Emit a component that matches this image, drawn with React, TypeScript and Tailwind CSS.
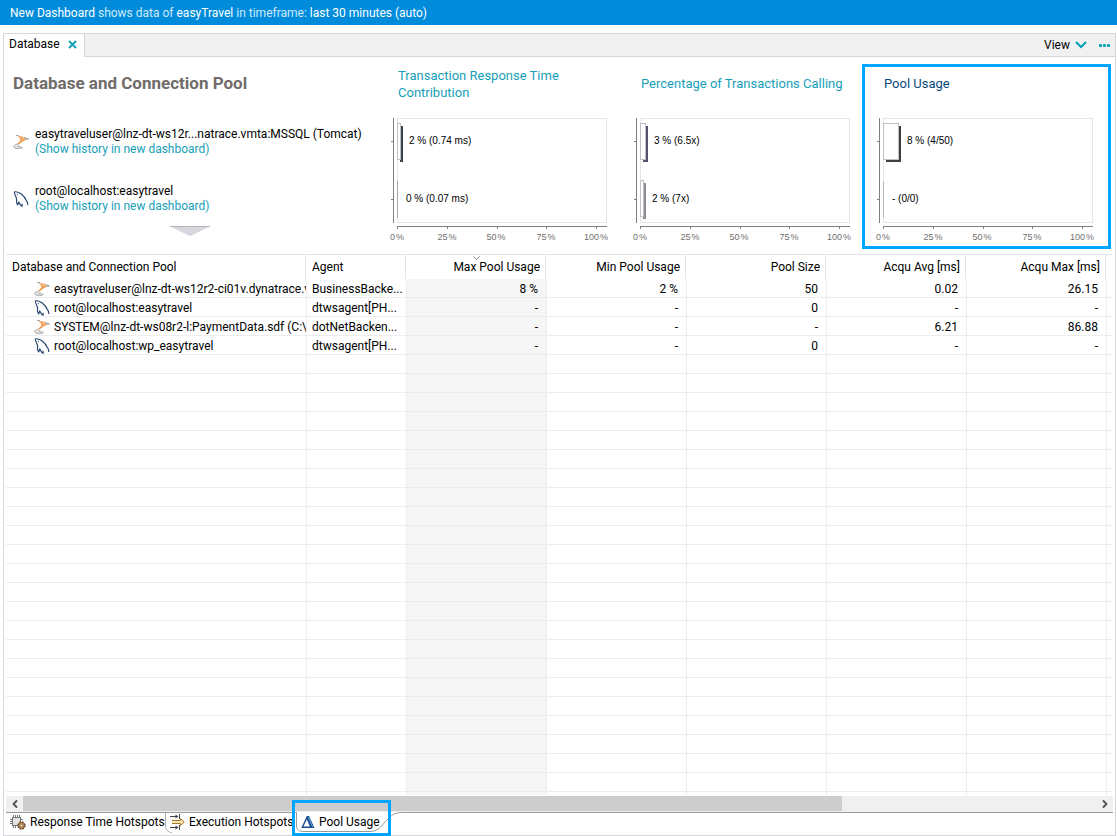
import { useState } from 'react'
import { ChevronLeft, ChevronRight } from 'lucide-react'
import clsx from 'clsx'

type DbKind = 'mssql' | 'mysql'

interface Bar {
  width: number
  shadow: string
  labelX: number
  label: string
}

interface Row {
  kind: DbKind
  name: string
  agent: string
  values: string[]
}

const CHARTS: { title: string; bars: Bar[] }[] = [
  {
    title: 'Transaction Response Time Contribution',
    bars: [
      { width: 3, shadow: '#3c4448', labelX: 30, label: '2 % (0.74 ms)' },
      { width: 0, shadow: '#a9a9a9', labelX: 27, label: '0 % (0.07 ms)' },
    ],
  },
  {
    title: 'Percentage of Transactions Calling',
    bars: [
      { width: 5, shadow: '#55526f', labelX: 32, label: '3 % (6.5x)' },
      { width: 3, shadow: '#8a8d90', labelX: 30, label: '2 % (7x)' },
    ],
  },
  {
    title: 'Pool Usage',
    bars: [
      { width: 15, shadow: '#3c4043', labelX: 42, label: '8 % (4/50)' },
      { width: 0, shadow: '#b9b9b9', labelX: 27, label: '- (0/0)' },
    ],
  },
]

const POOLS: { kind: DbKind; name: string }[] = [
  { kind: 'mssql', name: 'easytraveluser@lnz-dt-ws12r...natrace.vmta:MSSQL (Tomcat)' },
  { kind: 'mysql', name: 'root@localhost:easytravel' },
]

const VALUE_COLUMNS = ['Max Pool Usage', 'Min Pool Usage', 'Pool Size', 'Acqu Avg [ms]', 'Acqu Max [ms]']

const ROWS: Row[] = [
  {
    kind: 'mssql',
    name: 'easytraveluser@lnz-dt-ws12r2-ci01v.dynatrace.v',
    agent: 'BusinessBacke...',
    values: ['8 %', '2 %', '50', '0.02', '26.15'],
  },
  { kind: 'mysql', name: 'root@localhost:easytravel', agent: 'dtwsagent[PH...', values: ['-', '-', '0', '-', '-'] },
  {
    kind: 'mssql',
    name: 'SYSTEM@lnz-dt-ws08r2-l:PaymentData.sdf (C:\\',
    agent: 'dotNetBacken...',
    values: ['-', '-', '-', '6.21', '86.88'],
  },
  { kind: 'mysql', name: 'root@localhost:wp_easytravel', agent: 'dtwsagent[PH...', values: ['-', '-', '0', '-', '-'] },
]

const EMPTY_ROWS = 24

function DbIcon({ kind }: { kind: DbKind }) {
  if (kind === 'mssql') {
    return (
      <svg viewBox="0 0 16 16" className="h-4 w-4 shrink-0" aria-hidden="true">
        <path d="M4 1.500L7 2.500L10.500 2.500L15 4.500L11 6.500L8 9L5 10.500L7.500 6.500L6.500 4Z" fill="#f8c493" />
        <path d="M5.500 3H9M7 5.500L10 4.500M9 7L12 5.500M5 10L8.500 6.500" fill="none" stroke="#ee9040" strokeWidth="1.200" />
        <path d="M3 1.500H6M11 3.500L15.500 5L12.500 5.500" fill="none" stroke="#a3a6aa" strokeWidth="1" />
        <path d="M5 10C1.500 10.500 0 12 1 13.500C3 15 8 15 9.500 13.500L5 12.500L6.500 11" fill="#e2e2e2" stroke="#a8a8a8" strokeWidth="0.900" />
      </svg>
    )
  }
  return (
    <svg viewBox="0 0 16 16" className="h-4 w-4 shrink-0" aria-hidden="true">
      <path
        d="M1.500 0.800C4 0.500 6 1.500 8 2.800C11 5.200 12.500 7.500 13.300 9.500C14.500 10.500 14.800 12 14.800 14M1.500 0.800C1 2 2 4 3 6C4 8 3.500 9 3.500 11C3.800 12.800 4.300 13.300 4.700 13.800C5.300 12.800 5.500 11.500 5.800 11C7 12.500 7 15 9.500 15.300M9.500 15.300C8.800 14.200 8.800 13.500 9.300 12.800"
        fill="none"
        stroke="#29466f"
        strokeWidth="1.200"
      />
      <circle cx="4.300" cy="3.600" r="0.600" fill="#29466f" />
    </svg>
  )
}

function BarChart({ bars }: { bars: Bar[] }) {
  return (
    <svg width="244" height="144" className="block overflow-visible" fontFamily="Liberation Sans, Arial, sans-serif" shapeRendering="crispEdges">
      <rect x="18.5" y="18.5" width="209" height="104" fill="#fff" stroke="#e6e6e6" />
      <path d="M14.5 18V123M12 41.5H14M12 99.5H14M18 126.5H228" fill="none" stroke="#808080" />
      {[0, 25, 50, 75, 100].map((tick, i) => (
        <g key={tick}>
          <rect x={18 + Math.round(i * 49.8)} y="127" width="1" height="2" fill="#808080" />
          <text x={18 + Math.round(i * 49.7)} y="140" textAnchor="middle" fontSize="9" fill="#707070">
            {tick}
            {'\u200a'}%
          </text>
        </g>
      ))}
      {bars.map((bar, i) => (
        <g key={bar.label}>
          {bar.width > 0 ? (
            <>
              <rect x="21" y={26 + i * 57} width={bar.width} height="36" fill={bar.shadow} />
              <rect x="18.5" y={23.5 + i * 57} width={bar.width} height="36" fill="#fff" stroke="#bfc1c6" />
            </>
          ) : (
            <rect x="18" y={24 + i * 57} width="1" height="37" fill={bar.shadow} />
          )}
          <text x={bar.labelX} y={44 + i * 58} fontSize="10" fill="#000">
            {bar.label}
          </text>
        </g>
      ))}
    </svg>
  )
}

function TopTabs() {
  return (
    <div className="flex h-[23px] shrink-0 bg-[#f1f1f1]">
      <div className="flex w-[81px] items-center gap-2 border-r border-[#d5d7dc] bg-white pb-[3px] pl-[5px]">
        <span>Database</span>
        <button type="button" aria-label="Close Database">
          <svg viewBox="0 0 9 9" className="h-[9px] w-[9px]" aria-hidden="true">
            <path d="M1 1L8 8M8 1L1 8" stroke="#16a0b8" strokeWidth="2" />
          </svg>
        </button>
      </div>
      <div className="flex flex-1 items-center justify-end gap-3 border-b border-[#d5d7dc] pr-[5px]">
        <button type="button" className="flex items-center gap-[5px]">
          View
          <svg viewBox="0 0 12 8" className="h-2 w-3" aria-hidden="true">
            <path d="M1 1L6 6L11 1" fill="none" stroke="#00a1b9" strokeWidth="2" />
          </svg>
        </button>
        <button type="button" aria-label="More" className="flex gap-px">
          {[0, 1, 2].map((dot) => (
            <span key={dot} className="h-[3px] w-[3px] rounded-[1px] bg-[#00a1b9]" />
          ))}
        </button>
      </div>
    </div>
  )
}

function Summary() {
  return (
    <section className="grid shrink-0 grid-cols-[372fr_243fr_243fr_249fr] pr-1 pb-[5px]">
      <div className="min-w-0 pt-4 pl-[9px]">
        <h1 className="text-[17px] leading-5 font-bold whitespace-nowrap text-[#6f6c69]">Database and Connection Pool</h1>
        <ul className="mt-[34px] flex flex-col gap-[27px]">
          {POOLS.map((pool) => (
            <li key={pool.name} className="flex items-center gap-[6px]">
              <DbIcon kind={pool.kind} />
              <div className="leading-[15px] whitespace-nowrap">
                <div>{pool.name}</div>
                <a href="#history" className="block text-[#16a0b8]">
                  (Show history in new dashboard)
                </a>
              </div>
            </li>
          ))}
        </ul>
        <button type="button" aria-label="Show more" className="mt-3 ml-[157px] block">
          <svg viewBox="0 0 40 10" className="h-[10px] w-10" aria-hidden="true">
            <path d="M0 0.500H40L20 10Z" fill="#d5d7dc" />
            <path d="M0 0.500H40" stroke="#b4b7ba" />
          </svg>
        </button>
      </div>
      {CHARTS.map((chart, i) => {
        const active = i === CHARTS.length - 1
        return (
          <div key={chart.title} className={clsx('mt-[7px] h-[185px] min-w-0 border-3', active ? 'border-[#00a5ff]' : 'border-transparent')}>
            <h2 className="flex h-[33px] items-center pl-[19px] text-[13px] leading-[17px]">
              <a href="#chart" className={clsx('max-w-[205px]', active ? 'text-[#0b4a7d]' : 'text-[#16a0b8]')}>
                {chart.title}
              </a>
            </h2>
            <BarChart bars={chart.bars} />
          </div>
        )
      })}
    </section>
  )
}

function PoolTable() {
  return (
    <div className="mx-[2px] min-h-0 flex-1 overflow-hidden border-t border-[#e4e4e4]">
      <table className="w-full table-fixed border-separate border-spacing-0">
        <colgroup>
          <col className="w-[300px]" />
          <col className="w-[100px]" />
          {VALUE_COLUMNS.map((c) => (
            <col key={c} className="w-[140px]" />
          ))}
          <col />
        </colgroup>
        <thead>
          <tr className="h-6 whitespace-nowrap">
            <th className="border-r border-[#e4e4e4] pl-[6px] text-left font-normal">Database and Connection Pool</th>
            <th className="border-r border-[#e4e4e4] pl-[6px] text-left font-normal">Agent</th>
            {VALUE_COLUMNS.map((c, i) => (
              <th key={c} className="relative border-r border-[#e4e4e4] pr-[5px] text-right font-normal">
                {i === 0 && (
                  <svg viewBox="0 0 7 4" className="absolute top-[1px] left-[67px] h-1 w-[7px]" aria-label="Sorted descending">
                    <path d="M0.500 0.500L3.500 3.500L6.500 0.500" fill="none" stroke="#808080" />
                  </svg>
                )}
                {c}
              </th>
            ))}
            <th />
          </tr>
        </thead>
        <tbody>
          {ROWS.map((row) => (
            <tr key={row.name} className="h-[19px] leading-4">
              <td className="overflow-hidden border-b border-[#ededed] pt-[2px] pl-7">
                <div className="flex items-center gap-1 whitespace-nowrap">
                  <DbIcon kind={row.kind} />
                  {row.name}
                </div>
              </td>
              <td className="overflow-hidden border-b border-l border-[#ededed] pt-[2px] pl-[5px] whitespace-nowrap">{row.agent}</td>
              {row.values.map((value, i) => (
                <td
                  key={i}
                  className={clsx('border-b border-l border-[#ededed] pt-[2px] pr-2 text-right', i === 0 && 'bg-[#f6f6f6]')}
                >
                  {value}
                </td>
              ))}
              <td className="border-b border-l border-[#ededed]" />
            </tr>
          ))}
          {Array.from({ length: EMPTY_ROWS }, (_, r) => (
            <tr key={r} className="h-[19px]">
              <td className="border-b border-[#ededed]" />
              {Array.from({ length: 7 }, (_, c) => (
                <td key={c} className={clsx('border-b border-l border-[#ededed]', c === 1 && 'bg-[#f6f6f6]')} />
              ))}
            </tr>
          ))}
        </tbody>
      </table>
    </div>
  )
}

function Scrollbar() {
  return (
    <div className="mx-[2px] mt-px flex h-4 shrink-0 bg-[#f0f0f0]">
      <button type="button" aria-label="Scroll left" className="flex w-[17px] items-center justify-center">
        <ChevronLeft className="h-3 w-3 text-[#555]" strokeWidth={4} />
      </button>
      <div className="flex-1">
        <div className="h-[15px] w-[76.3%] bg-[#cdcdcd]" />
      </div>
      <button type="button" aria-label="Scroll right" className="flex w-[17px] items-center justify-center">
        <ChevronRight className="h-3 w-3 text-[#555]" strokeWidth={4} />
      </button>
    </div>
  )
}

function ResponseIcon() {
  return (
    <svg viewBox="0 0 16 16" className="h-4 w-4 shrink-0" aria-hidden="true">
      <rect x="2.500" y="3.500" width="8" height="8" fill="#e4e4e4" stroke="#777" />
      <path d="M3.500 1V3M5.500 1V3M7.500 1V3M9.500 1V3M0 5.500H2M0 7.500H2M0 9.500H2M3.500 12V14M5.500 12V14M11 5.500H13" stroke="#777" />
      <circle cx="11.500" cy="11.500" r="3.200" fill="#e6b36a" stroke="#6c4a2b" strokeWidth="2" strokeDasharray="1.700 0.800" />
      <circle cx="11.500" cy="11.500" r="2.700" fill="#e6ad68" stroke="#6c4a2b" strokeWidth="0.700" />
      <circle cx="11.500" cy="11.500" r="1.200" fill="#fff" stroke="#6c4a2b" strokeWidth="0.700" />
    </svg>
  )
}

function ExecutionIcon() {
  return (
    <svg viewBox="0 0 16 16" className="h-4 w-4 shrink-0" aria-hidden="true">
      <path d="M1 2.500H7M1 13.500H7M10.500 0V5M10.500 11V16" stroke="#444" />
      <path d="M6.500 0.500L9.500 2.500L6.500 4.500ZM6.500 11.500L9.500 13.500L6.500 15.500Z" fill="#444" />
      <path d="M3 6.500H11.500V4.500L15.300 8L11.500 11.500V9.500H3" fill="#fbe7b6" stroke="#a87a25" />
    </svg>
  )
}

function PoolIcon() {
  return (
    <svg viewBox="0 0 14 14" className="h-[14px] w-[14px] shrink-0" aria-hidden="true">
      <path d="M5.800 1H8L13.500 13H0.300Z" fill="#1d4f91" />
      <path d="M5.800 4.500L8.800 11.500H2.500Z" fill="#fff" />
      <path d="M7.300 2.500L11.700 12" stroke="#5fa3dc" strokeWidth="1" />
    </svg>
  )
}

function ViewTabs() {
  const [selected] = useState('Pool Usage')
  return (
    <div role="tablist" className="mx-[2px] flex h-[23px] shrink-0 border-t border-[#9a9a9a] whitespace-nowrap">
      <button type="button" role="tab" className="flex w-[159px] items-center gap-1 pb-1 pl-1">
        <ResponseIcon />
        Response Time Hotspots
      </button>
      <button type="button" role="tab" className="relative flex w-[131px] items-center gap-1 pb-1 pl-1">
        <svg viewBox="0 0 8 22" className="absolute top-0 left-0 h-[22px] w-2" aria-hidden="true">
          <path d="M0.500 0V13C0.500 16 3 19 7 20" fill="none" stroke="#aaa" />
        </svg>
        <ExecutionIcon />
        Execution Hotspots
      </button>
      <button
        type="button"
        role="tab"
        aria-selected={selected === 'Pool Usage'}
        className="relative -mt-px flex w-[108px] items-center gap-1 bg-white pb-[3px] pl-[5px]"
      >
        <svg viewBox="0 0 108 22" className="absolute top-0 left-0 h-[22px] w-[108px]" aria-hidden="true">
          <path d="M0.500 0V14C0.500 18 3 19.500 8 19.500H74C84 19.500 86 12 92 7C97 1.500 100 0.500 108 0.500" fill="none" stroke="#9a9a9a" />
        </svg>
        <PoolIcon />
        <span>Pool Usage</span>
        <span className="pointer-events-none absolute -top-3 -left-1 h-9 w-[99px] border-3 border-[#00a5ff]" />
      </button>
    </div>
  )
}

export default function App() {
  return (
    <div className="flex h-screen flex-col overflow-hidden bg-white font-['Segoe_UI','Roboto',sans-serif] text-[12px] leading-4 text-black">
      <header className="flex h-[25px] shrink-0 items-center bg-[#008cdb] pl-[10px] text-white">
        <p>
          New Dashboard <span className="text-[#cfe9fa]">shows data of</span> easyTravel <span className="text-[#cfe9fa]">in timeframe:</span> last 30 minutes (auto)
        </p>
      </header>
      <main className="mt-2 mr-px ml-[3px] flex min-h-0 flex-1 flex-col border border-[#d5d7dc]">
        <TopTabs />
        <Summary />
        <PoolTable />
        <Scrollbar />
        <ViewTabs />
      </main>
    </div>
  )
}
